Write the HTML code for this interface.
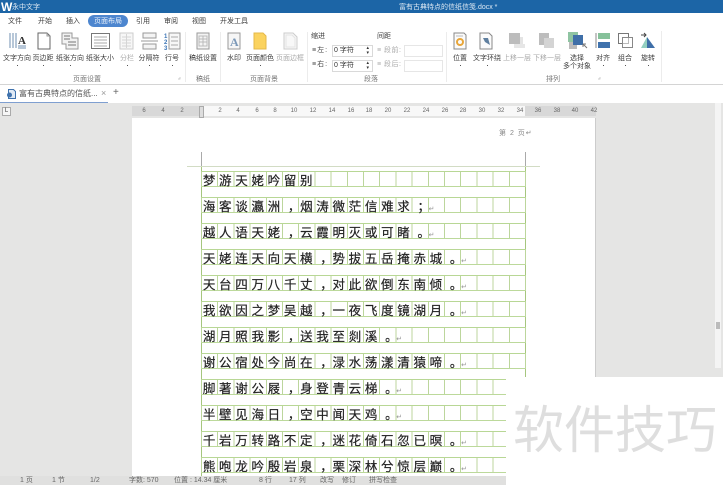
<!DOCTYPE html>
<html><head><meta charset="utf-8"><style>
html,body{margin:0;padding:0}
body{width:723px;height:485px;overflow:hidden;position:relative;background:#e5e5e4;font-family:"Liberation Sans","Noto Sans CJK SC",sans-serif;color:#444}
div,span{box-sizing:border-box}
#w{position:absolute;left:0;top:0;width:723px;height:485px;overflow:hidden;filter:blur(.3px)}
.a{position:absolute;white-space:nowrap;line-height:1}
.l{position:absolute;white-space:nowrap;line-height:1;font-size:7px;transform:translateX(-50%);color:#3c3c3c}
.g{color:#aaa}
.dot{position:absolute;width:1px;height:1px;background:#555}
.row{position:absolute;left:201px;width:325px;height:16px;border-top:1px solid #b8d795;border-bottom:1px solid #bcd99b;background:repeating-linear-gradient(90deg,#bcd69c 0 1px,transparent 1px 16.2px)}
.t{position:absolute;left:201px;height:16px;font-size:12.500px;line-height:16px;letter-spacing:3.700px;color:#222;white-space:nowrap;font-family:"Noto Sans CJK SC",sans-serif;padding-left:1.850px;-webkit-text-stroke:.2px #222}
.t i{font-style:normal;position:relative;left:4px}
.t b{font-weight:normal;font-size:7px;letter-spacing:0;color:#999;margin-left:-1px;-webkit-text-stroke:0}
.st{position:absolute;top:477px;font-size:7px;line-height:8px;color:#666;white-space:nowrap}
.box{position:absolute;width:41px;height:12px;background:#fff;border:1px solid #d9d9d9;font-size:7px;line-height:10px;padding-left:1px;color:#333}
.rn{position:absolute;top:108px;font-size:6px;line-height:6px;color:#666;transform:translateX(-50%)}
</style></head><body><div id="w">

<!-- title bar -->
<div class="a" style="left:0;top:0;width:723px;height:13px;background:#1c65a6"></div>
<div class="a" style="left:1px;top:0;font:bold 12px 'Liberation Sans',sans-serif;color:#fff">W</div>
<div class="a" style="left:12px;top:4px;font-size:7px;color:#dce8f3">永中文字</div>
<div class="a" style="left:399px;top:4px;font-size:7px;color:#dce8f3">富有古典特点的信纸信笺.docx *</div>

<!-- menu -->
<div class="a" style="left:0;top:13px;width:723px;height:72px;background:#fff"></div>
<div class="a" style="left:88px;top:15px;width:40px;height:12px;border-radius:6px;background:#4d86cf"></div>
<div class="l" style="left:15px;top:18px">文件</div>
<div class="l" style="left:45px;top:18px">开始</div>
<div class="l" style="left:73px;top:18px">插入</div>
<div class="l" style="left:108px;top:18px;color:#eaf2fb">页面布局</div>
<div class="l" style="left:143px;top:18px">引用</div>
<div class="l" style="left:171px;top:18px">审阅</div>
<div class="l" style="left:199px;top:18px">视图</div>
<div class="l" style="left:234px;top:18px">开发工具</div>

<!-- ribbon icons -->
<svg class="a" style="left:0;top:28px" width="723" height="58" viewBox="0 28 723 58" fill="none">
<path d="M10 33v15M13 33v15M16 33v15" stroke="#6f8fb0"/><text x="18" y="44" font-size="11" font-weight="bold" fill="#333" font-family="Liberation Serif">A</text><path d="M18 46h8M18 48h8" stroke="#6f8fb0"/>
<path d="M38 33h9l3 3v13H38z" stroke="#666"/><path d="M47 33v3h3" stroke="#999"/>
<path d="M62 33h10v5h6v11H66v-5h-4z" fill="#f2f2f2" stroke="#999"/><path d="M64 36h6M64 39h6M68 42h8M68 45h8" stroke="#777"/>
<path d="M91.500 33.500h18v15h-18z" stroke="#777"/><path d="M94 37h13M94 40h13M94 43h13M94 46h13" stroke="#aaa"/>
<path d="M120 33h13v16h-13z" fill="#f7f7f7" stroke="#ccc"/><path d="M122 37h9M122 40h9M122 43h9M122 46h9M126.500 34v14" stroke="#d5d5d5"/>
<path d="M143 33h13v5h-13zM141 41h17M143 44h13v5h-13z" stroke="#999" fill="#f4f4f4"/>
<path d="M169 33h11v16h-11z" stroke="#999" fill="#f7f7f7"/><path d="M171 37h7M171 41h7M171 45h7" stroke="#aaa"/>
<text x="164" y="38" font-size="6" fill="#3a74b5" font-weight="bold">1</text><text x="164" y="44" font-size="6" fill="#3a74b5" font-weight="bold">2</text><text x="164" y="50" font-size="6" fill="#3a74b5" font-weight="bold">3</text>
<path d="M197 33h12v16h-12z" stroke="#999" fill="#f4f4f4"/><path d="M199 36h8v10h-8zM199 39h8M199 42h8M203 36v10" stroke="#bbb"/>
<path d="M228 33h12v16h-12z" stroke="#999" fill="#f6f6f6"/><text x="230" y="46" font-size="12" fill="#7b98b8" font-family="Liberation Serif" font-weight="bold">A</text>
<path d="M254 33h9l3 3v13h-12z" fill="#fbd35f" stroke="#e5b84a"/>
<path d="M284 33h9l4 4v12h-13z" stroke="#ccc" fill="#f8f8f8"/><path d="M286 35h6l3 3v9h-9z" stroke="#e4e4e4"/>
<path d="M454 33h10l2 2v14h-12z" stroke="#888" fill="#fbfbfb"/><path d="M456 36h7" stroke="#bbb"/><circle cx="460" cy="42" r="3" stroke="#e8a63a" stroke-width="2"/>
<path d="M480 33h9l3 3v13h-12z" stroke="#888" fill="#fbfbfb"/><path d="M483 38h5l2 7-5-3z" fill="#5f7f9f"/>
<path d="M512 37h11v8h-8" fill="#e4e4e4"/><path d="M509 33h11v11h-11z" fill="#bcbcbc"/><path d="M514 44h11v4h-11z" fill="#e6e6e6"/>
<path d="M539 33h10v5h-4v7h-6z" fill="#bdbdbd"/><path d="M544 38h10v10h-10z" fill="#d4d4d4"/>
<path d="M568 32h10v10h-10z" fill="#8fc4a2"/><path d="M569 42h8v7h-8z" fill="#bbb"/><path d="M573 35h10v10h-10z" fill="#3f6fa8"/><path d="M583 44l4 4M583 44v3M583 44h3" stroke="#777"/>
<path d="M596 33v15" stroke="#888"/><path d="M598 33h12v6h-12z" fill="#86c19a"/><path d="M598 42h12v6h-12z" fill="#3f72ad"/>
<path d="M618.500 33.500h10v10h-10z" stroke="#777"/><path d="M622.500 37.500h10v10h-10z" stroke="#888" fill="#fff" fill-opacity=".5"/>
<path d="M647 37L655 48H647z" fill="#3f6fa8"/><path d="M647 37L641 48H647z" fill="#93cfc0"/><path d="M641 35h5M644 33l2 2-2 2" stroke="#444"/>
<path d="M185.500 32v50M220.500 32v50M307.500 32v50M446.500 32v50M661.500 31v51" stroke="#ececec"/>
<path d="M0 84.500h723" stroke="#d4d4d4"/>
<path d="M178 79h2v-2M598 79h2v-2" stroke="#bbb" stroke-width=".7"/>
</svg>

<div class="l" style="left:17px;top:55px">文字方向</div>
<div class="l" style="left:43px;top:55px">页边距</div>
<div class="l" style="left:70px;top:55px">纸张方向</div>
<div class="l" style="left:100px;top:55px">纸张大小</div>
<div class="l g" style="left:127px;top:55px">分栏</div>
<div class="l" style="left:149px;top:55px">分隔符</div>
<div class="l" style="left:172px;top:55px">行号</div>
<div class="l" style="left:203px;top:55px">稿纸设置</div>
<div class="l" style="left:234px;top:55px">水印</div>
<div class="l" style="left:260px;top:55px">页面颜色</div>
<div class="l g" style="left:290px;top:55px">页面边框</div>
<div class="l" style="left:460px;top:55px">位置</div>
<div class="l" style="left:487px;top:55px">文字环绕</div>
<div class="l g" style="left:517px;top:55px">上移一层</div>
<div class="l g" style="left:547px;top:55px">下移一层</div>
<div class="l" style="left:577px;top:55px">选择</div>
<div class="l" style="left:577px;top:63px">多个对象</div>
<div class="l" style="left:603px;top:55px">对齐</div>
<div class="l" style="left:625px;top:55px">组合</div>
<div class="l" style="left:648px;top:55px">旋转</div>
<div class="dot" style="left:17px;top:65px"></div><div class="dot" style="left:43px;top:65px"></div><div class="dot" style="left:70px;top:65px"></div><div class="dot" style="left:100px;top:65px"></div><div class="dot" style="left:127px;top:65px"></div><div class="dot" style="left:149px;top:65px"></div><div class="dot" style="left:172px;top:65px"></div><div class="dot" style="left:260px;top:65px"></div><div class="dot" style="left:460px;top:65px"></div><div class="dot" style="left:487px;top:65px"></div><div class="dot" style="left:603px;top:65px"></div><div class="dot" style="left:625px;top:65px"></div><div class="dot" style="left:648px;top:65px"></div>

<div class="l" style="left:87px;top:76px;color:#777">页面设置</div>
<div class="l" style="left:203px;top:76px;color:#777">稿纸</div>
<div class="l" style="left:264px;top:76px;color:#777">页面背景</div>
<div class="l" style="left:371px;top:76px;color:#777">段落</div>
<div class="l" style="left:553px;top:76px;color:#777">排列</div>

<!-- paragraph -->
<div class="l" style="left:318px;top:33px">缩进</div>
<div class="l" style="left:384px;top:33px">间距</div>
<div class="a" style="left:312px;top:47px;font-size:7px;letter-spacing:1px">≡左:</div>
<div class="a" style="left:312px;top:61px;font-size:7px;letter-spacing:1px">≡右:</div>
<div class="box" style="left:332px;top:45px">0 字符<span style="position:absolute;right:3px;top:0;font-size:5px;line-height:5px">▴<br>▾</span></div>
<div class="box" style="left:332px;top:60px">0 字符<span style="position:absolute;right:3px;top:0;font-size:5px;line-height:5px">▴<br>▾</span></div>
<div class="a g" style="left:377px;top:47px;font-size:7px;letter-spacing:.5px">≡ 段前:</div>
<div class="a g" style="left:377px;top:61px;font-size:7px;letter-spacing:.5px">≡ 段后:</div>
<div class="box" style="left:404px;top:45px;width:39px;border-color:#e6e6e6"></div>
<div class="box" style="left:404px;top:60px;width:39px;border-color:#e6e6e6"></div>

<!-- tab row -->
<div class="a" style="left:0;top:85px;width:723px;height:18px;background:#fff"></div>
<div class="a" style="left:0;top:102px;width:108px;height:1px;background:#7f9fd0"></div>
<svg class="a" style="left:6px;top:88px" width="10" height="12" fill="none"><path d="M2.500 1.500h5l2 2v7h-7z" stroke="#3f72ad" fill="#dfe9f5"/><circle cx="3.500" cy="7" r="2.500" fill="#3f72ad"/></svg>
<div class="a" style="left:19px;top:90px;font-size:8px;color:#555">富有古典特点的信纸...</div>
<div class="a" style="left:101px;top:89px;font-size:9px;color:#999">×</div>
<div class="a" style="left:113px;top:88px;font-size:10px;color:#666">+</div>

<!-- ruler -->
<div class="a" style="left:0;top:103px;width:723px;height:15px;background:#e5e5e4"></div>
<div class="a" style="left:2px;top:107px;width:9px;height:9px;border:1px solid #aaa;background:#f6f6f6;font-size:6px;line-height:7px;text-align:center;color:#444">L</div>
<div class="a" style="left:132px;top:106px;width:464px;height:10px;background:#f8f8f8"></div>
<div class="a" style="left:132px;top:106px;width:69px;height:10px;background:#d8d8d8"></div>
<div class="a" style="left:525px;top:106px;width:71px;height:10px;background:#d8d8d8"></div>
<div class="a" style="left:199px;top:106px;width:5px;height:12px;border:1px solid #aaa;background:#ddd"></div>
<div class="rn" style="left:144px">6</div><div class="rn" style="left:163px">4</div><div class="rn" style="left:182px">2</div>
<div class="rn" style="left:220px">2</div><div class="rn" style="left:238px">4</div><div class="rn" style="left:257px">6</div><div class="rn" style="left:275px">8</div><div class="rn" style="left:294px">10</div><div class="rn" style="left:313px">12</div><div class="rn" style="left:332px">14</div><div class="rn" style="left:351px">16</div><div class="rn" style="left:369px">18</div><div class="rn" style="left:388px">20</div><div class="rn" style="left:407px">22</div><div class="rn" style="left:426px">24</div><div class="rn" style="left:445px">26</div><div class="rn" style="left:463px">28</div><div class="rn" style="left:482px">30</div><div class="rn" style="left:501px">32</div><div class="rn" style="left:520px">34</div><div class="rn" style="left:538px">36</div><div class="rn" style="left:557px">38</div><div class="rn" style="left:575px">40</div><div class="rn" style="left:594px">42</div>

<!-- scrollbar -->
<div class="a" style="left:715px;top:103px;width:6px;height:265px;background:#f4f4f4"></div>
<div class="a" style="left:716px;top:322px;width:4px;height:7px;background:#bbb"></div>

<!-- page -->
<div class="a" style="left:132px;top:118px;width:464px;height:358px;background:#fff;border-right:1px solid #ccc"></div>
<div class="a" style="left:499px;top:130px;font-size:7px;letter-spacing:1px;color:#888">第 2 页↵</div>
<div class="a" style="left:201px;top:166px;width:1px;height:310px;background:#a6c67e"></div>
<div class="a" style="left:525px;top:166px;width:1px;height:310px;background:#a6c67e"></div>
<div class="a" style="left:201px;top:152px;width:1px;height:14px;background:#aaa"></div>
<div class="a" style="left:525px;top:152px;width:1px;height:14px;background:#aaa"></div>
<div class="a" style="left:187px;top:166px;width:353px;height:1px;background:#d2dcc4"></div>

<div class="row" style="top:171px"></div>
<div class="row" style="top:197px"></div>
<div class="row" style="top:223px"></div>
<div class="row" style="top:249px"></div>
<div class="row" style="top:275px"></div>
<div class="row" style="top:301px"></div>
<div class="row" style="top:327px"></div>
<div class="row" style="top:353px"></div>
<div class="row" style="top:379px"></div>
<div class="row" style="top:405px"></div>
<div class="row" style="top:431px"></div>
<div class="row" style="top:457px"></div>

<div class="t" style="top:172px">梦游天姥吟留别</div>
<div class="t" style="top:198px">海客谈瀛洲<i>，</i>烟涛微茫信难求<i>；</i><b>↵</b></div>
<div class="t" style="top:224px">越人语天姥<i>，</i>云霞明灭或可睹<i>。</i><b>↵</b></div>
<div class="t" style="top:250px">天姥连天向天横<i>，</i>势拔五岳掩赤城<i>。</i><b>↵</b></div>
<div class="t" style="top:276px">天台四万八千丈<i>，</i>对此欲倒东南倾<i>。</i><b>↵</b></div>
<div class="t" style="top:302px">我欲因之梦吴越<i>，</i>一夜飞度镜湖月<i>。</i><b>↵</b></div>
<div class="t" style="top:328px">湖月照我影<i>，</i>送我至剡溪<i>。</i><b>↵</b></div>
<div class="t" style="top:354px">谢公宿处今尚在<i>，</i>渌水荡漾清猿啼<i>。</i><b>↵</b></div>
<div class="t" style="top:380px">脚著谢公屐<i>，</i>身登青云梯<i>。</i><b>↵</b></div>
<div class="t" style="top:406px">半壁见海日<i>，</i>空中闻天鸡<i>。</i><b>↵</b></div>
<div class="t" style="top:432px">千岩万转路不定<i>，</i>迷花倚石忽已暝<i>。</i><b>↵</b></div>
<div class="t" style="top:458px">熊咆龙吟殷岩泉<i>，</i>栗深林兮惊层巅<i>。</i><b>↵</b></div>

<!-- status bar -->
<div class="a" style="left:0;top:476px;width:723px;height:9px;background:#e0e0df"></div>
<div class="st" style="left:20px">1 页</div>
<div class="st" style="left:52px">1 节</div>
<div class="st" style="left:90px">1/2</div>
<div class="st" style="left:129px">字数: 570</div>
<div class="st" style="left:174px">位置 : 14.34 厘米</div>
<div class="st" style="left:259px">8 行</div>
<div class="st" style="left:289px">17 列</div>
<div class="st" style="left:320px">改写</div>
<div class="st" style="left:342px">修订</div>
<div class="st" style="left:369px">拼写检查</div>

<!-- watermark -->
<div class="a" style="left:506px;top:377px;width:217px;height:108px;background:#fff"></div>
<div class="a" style="left:513px;top:401px;font-size:51px;color:#dedede;font-family:'Noto Sans CJK SC',sans-serif">软件技巧</div>
</div></body></html>
